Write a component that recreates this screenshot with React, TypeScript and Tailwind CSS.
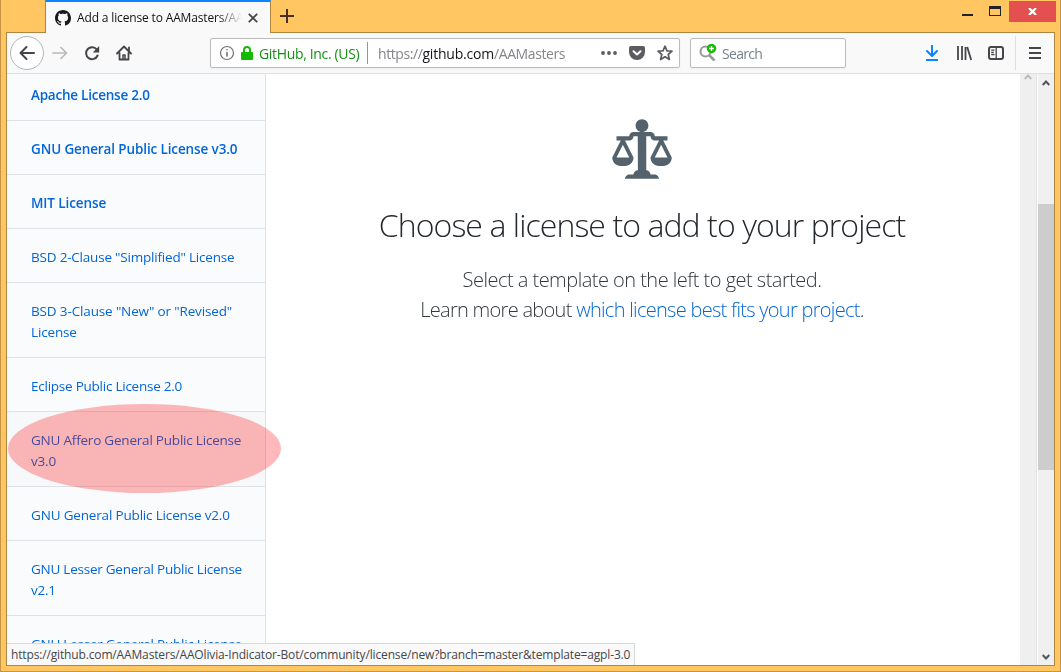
import type { ReactNode } from "react";

type License = { lines: string[]; bold?: boolean; hover?: boolean; spacing: string };

const licenses: License[] = [
  { lines: ["Apache License 2.0"], bold: true, spacing: "tracking-[-0.23px]" },
  { lines: ["GNU General Public License v3.0"], bold: true, spacing: "tracking-[-0.12px]" },
  { lines: ["MIT License"], bold: true, spacing: "tracking-[-0.1px]" },
  { lines: ['BSD 2-Clause "Simplified" License'], spacing: "tracking-[-0.2px]" },
  { lines: ['BSD 3-Clause "New" or "Revised"', "License"], spacing: "tracking-[-0.14px]" },
  { lines: ["Eclipse Public License 2.0"], spacing: "tracking-[-0.24px]" },
  { lines: ["GNU Affero General Public License", "v3.0"], hover: true, spacing: "tracking-[-0.21px]" },
  { lines: ["GNU General Public License v2.0"], spacing: "tracking-[-0.17px]" },
  { lines: ["GNU Lesser General Public License", "v2.1"], spacing: "tracking-[-0.24px]" },
  { lines: ["GNU Lesser General Public License", "v3.0"], spacing: "tracking-[-0.24px]" },
];

function Icon({ children, className = "" }: { children: ReactNode; className?: string }) {
  return (
    <svg
      viewBox="0 0 16 16"
      className={`h-4 w-4 shrink-0 ${className}`}
      fill="none"
      stroke="currentColor"
      strokeWidth="2"
      strokeLinecap="round"
      strokeLinejoin="round"
    >
      {children}
    </svg>
  );
}

function TitleBar() {
  return (
    <div className="flex h-[33px] shrink-0 items-start">
      <div className="flex h-[33px] w-[44px] shrink-0">
        <div className="ml-[5px] grow border-b border-[#ae8642]" />
      </div>
      <div className="flex h-[33px] w-[226px] shrink-0 items-center border-x border-t-2 border-x-[#ae8642] border-t-[#0a84ff] bg-[#f9f9fa] pl-[9px]">
        <svg viewBox="0 0 16 16" className="h-4 w-4 shrink-0" fill="#1b1817">
          <path d="M8 0C3.58 0 0 3.58 0 8c0 3.54 2.29 6.53 5.47 7.59.4.07.55-.17.55-.38 0-.19-.01-.82-.01-1.49-2.01.37-2.53-.49-2.69-.94-.09-.23-.48-.94-.82-1.13-.28-.15-.68-.52-.01-.53.63-.01 1.08.58 1.23.82.72 1.21 1.87.87 2.33.66.07-.52.28-.87.51-1.07-1.78-.2-3.64-.89-3.64-3.95 0-.87.31-1.59.82-2.15-.08-.2-.36-1.02.08-2.12 0 0 .67-.21 2.2.82.64-.18 1.32-.27 2-.27s1.36.09 2 .27c1.53-1.04 2.2-.82 2.2-.82.44 1.1.16 1.92.08 2.12.51.56.82 1.27.82 2.15 0 3.07-1.87 3.75-3.65 3.95.29.25.54.73.54 1.48 0 1.07-.01 1.93-.01 2.2 0 .21.15.46.55.38A8.01 8.01 0 0 0 16 8c0-4.42-3.58-8-8-8z" />
        </svg>
        <span className="ml-[6px] w-[165px] overflow-hidden bg-linear-to-r from-[#111] from-85% to-transparent bg-clip-text text-[12px] tracking-[-0.15px] whitespace-nowrap text-transparent">
          Add a license to AAMasters/AA
        </span>
        <svg viewBox="0 0 10 10" className="ml-[6px] h-[10px] w-[10px]" fill="none" stroke="#454545" strokeWidth="1.8">
          <path d="M.8.8 9.2 9.2M9.2.8.8 9.2" />
        </svg>
      </div>
      <div className="mr-[5px] flex h-[33px] grow items-start border-b border-[#ae8642]">
        <svg viewBox="0 0 14 14" className="mt-[9px] ml-[9px] h-[14px] w-[14px]" fill="none" stroke="#4b2d22" strokeWidth="2">
          <path d="M7 0v14M0 7h14" />
        </svg>
        <div className="-mr-px ml-auto flex">
          <div className="mt-[14px] h-[2px] w-[11px] bg-[#20242a]" />
          <div className="mt-[6px] ml-4 h-[10px] w-3 border border-t-[3px] border-[#20242a]" />
          <div className="mt-px ml-2 flex h-[21px] w-[47px] items-center justify-center bg-[#e45050]">
            <svg viewBox="0 0 9 7" className="h-[7px] w-[9px]" fill="none" stroke="#fff" strokeWidth="2.2">
              <path d="M1 0 8 7M8 0 1 7" />
            </svg>
          </div>
        </div>
      </div>
    </div>
  );
}

function Toolbar() {
  return (
    <div className="flex h-[41px] shrink-0 items-center border-b border-[#dfdfe1] bg-[#f9f9fa] pl-[3px] text-[#45454a]">
      <div className="flex h-[34px] w-[34px] items-center justify-center rounded-full border border-[#b5b5b6] bg-white">
        <Icon>
          <path d="M15 8H1.5M7.5 2 1.5 8l6 6" />
        </Icon>
      </div>
      <Icon className="ml-2 text-[#b9b9ba]">
        <path strokeWidth="1.7" d="M1 8h13.5M9 2.5 14.5 8 9 13.500" />
      </Icon>
      <Icon className="ml-4">
        <path d="M13 4.700A6 6 0 1 0 13.600 10.500" />
        <path d="M15.200 1V7.500H8.700z" fill="currentColor" stroke="none" />
      </Icon>
      <Icon className="ml-4">
        <path strokeWidth="1.8" d="M1 8.500 8 1.500l7 7M3.500 8v6.500h9V8M13 2.500v3" />
        <path strokeWidth="1.500" d="M7 14v-4h2v4" />
      </Icon>

      <div className="ml-[78px] flex h-[30px] w-[470px] shrink-0 items-center rounded-[2px] border border-[#bcbcbd] bg-white pl-2 shadow-xs">
        <Icon className="text-[#737373]">
          <circle cx="8" cy="8" r="6.500" strokeWidth="1.200" />
          <path strokeWidth="1.600" d="M8 7.500v3.500M8 4.700v.1" />
        </Icon>
        <svg viewBox="0 0 12 14" className="ml-[6px] h-[14px] w-3 shrink-0" fill="#12bc00">
          <path d="M2 6V4a4 4 0 0 1 8 0v2h1a1 1 0 0 1 1 1v6a1 1 0 0 1-1 1H1a1 1 0 0 1-1-1V7a1 1 0 0 1 1-1zm2 0h4V4a2 2 0 0 0-4 0z" />
        </svg>
        <span className="ml-[6px] w-[103px] shrink-0 text-[14px] tracking-[-0.34px] whitespace-nowrap text-[#159015]">GitHub, Inc. (US)</span>
        <span className="ml-[5px] h-[22px] w-px shrink-0 bg-[#43c96c]" />
        <span className="ml-[10px] w-[188px] shrink-0 overflow-hidden text-[14px] tracking-[-0.42px] whitespace-nowrap text-[#85858a]">
          https://<span className="tracking-[-0.2px] text-[#16161a]">github.com</span>/AAMasters,
        </span>
        <svg viewBox="0 0 16 4" className="ml-[35px] h-1 w-4 shrink-0" fill="#5c5c60">
          <circle cx="2" cy="2" r="1.900" />
          <circle cx="8" cy="2" r="1.900" />
          <circle cx="14" cy="2" r="1.900" />
        </svg>
        <svg viewBox="0 0 16 14" className="ml-3 h-[14px] w-4 shrink-0">
          <path fill="#5c5c60" d="M2 0h12a2 2 0 0 1 2 2v4a8 8 0 0 1-16 0V2a2 2 0 0 1 2-2z" />
          <path fill="none" stroke="#fff" strokeWidth="2" strokeLinecap="round" strokeLinejoin="round" d="m4.500 5.200 3.500 3.300 3.500-3.300" />
        </svg>
        <Icon className="ml-3 text-[#5c5c60]">
          <path strokeWidth="1.700" d="m8 1.200 2 4.600 5 .4-3.800 3.300 1.200 5L8 11.800l-4.400 2.700 1.200-5L1 6.200l5-.4z" />
        </Icon>
      </div>

      <div className="ml-[10px] flex h-[30px] w-[156px] shrink-0 items-center rounded-[2px] border border-[#bcbcbd] bg-white pl-2 shadow-xs">
        <svg viewBox="0 0 18 18" className="h-[18px] w-[18px] shrink-0" fill="none">
          <circle cx="6.500" cy="7.500" r="5" stroke="#98989a" strokeWidth="2" />
          <path d="m10.500 11.500 5 5" stroke="#98989a" strokeWidth="2.500" />
          <circle cx="12.500" cy="4.500" r="4.700" fill="#12bc00" />
          <path d="M12.500 2v5M10 4.500h5" stroke="#fff" strokeWidth="1.400" />
        </svg>
        <span className="ml-[5px] text-[14px] tracking-[-0.700px] text-[#75828c]">Search</span>
      </div>

      <div className="ml-auto flex items-center pr-[11px]">
        <Icon className="text-[#0a84ff]">
          <path strokeLinecap="butt" d="M8 0v10M2 15h12" />
          <path d="m3 6 5 5 5-5" />
        </Icon>
        <Icon className="ml-4">
          <path strokeLinecap="butt" d="M2 1v14M6 1v14M9.500 2v13M11.200 2l4 13" strokeWidth="1.800" />
        </Icon>
        <Icon className="ml-4">
          <rect x="1" y="2" width="14" height="12" rx="2" />
          <path strokeLinecap="butt" strokeWidth="1.300" d="M8.200 2v12M3.200 5.200h3.300M3.200 7.500h2.500M3.200 9.700h3.300" />
        </Icon>
        <div className="mr-[11px] ml-[11px] h-[34px] w-px bg-[#dedee0]" />
        <Icon>
          <path strokeLinecap="butt" d="M2 3h12M2 8h12M2 13h12" />
        </Icon>
      </div>
    </div>
  );
}

function Sidebar() {
  return (
    <nav className="h-full w-[259px] shrink-0 overflow-hidden border-r border-[#dfe2e5] bg-[#fafbfc]">
      <ul className="-mt-[7px]">
        {licenses.map((item, i) => (
          <li
            key={i}
            className={`border-b border-[#dfe2e5] pt-[18px] pb-[14px] pl-6 text-[13.5px] leading-[21px] whitespace-nowrap text-[#0366d6] ${item.spacing} ${item.bold ? "font-semibold" : ""} ${item.hover ? "bg-[#f6f8fa]" : ""}`}
          >
            {item.lines.map((line) => (
              <div key={line}><span>{line}</span></div>
            ))}
          </li>
        ))}
      </ul>
    </nav>
  );
}

function Chevron({ className, down = false }: { className: string; down?: boolean }) {
  return (
    <svg viewBox="0 0 8 6" className={`h-[6px] w-2 shrink-0 ${className}`} fill="none" stroke="currentColor" strokeWidth="2">
      <path d={down ? "m.7 1 3.300 3.500L7.300 1" : "M.7 5 4 1.500 7.300 5"} />
    </svg>
  );
}

export default function App() {
  return (
    <div className="relative h-[672px] w-[1061px] overflow-hidden bg-[#ffc661] font-['Open_Sans','Noto_Sans',sans-serif]">
      <div className="flex h-full flex-col border border-t-0 border-[#c49643]">
        <TitleBar />
        <div className="mx-[5px] mb-[5px] flex min-h-0 grow flex-col border border-t-0 border-[#ae8642]">
          <Toolbar />
          <div className="flex min-h-0 grow bg-white">
            <Sidebar />
            <main className="flex min-w-0 grow flex-col items-center pt-[41px] pr-[2px] text-center font-light">
              <svg viewBox="0 0 14 16" className="h-[68px] w-[60px] shrink-0" fill="#53626c">
                <path
                  fillRule="evenodd"
                  d="M7 4c-.83 0-1.500-.67-1.500-1.500S6.170 1 7 1s1.500.67 1.500 1.500S7.830 4 7 4zm7 6c0 1.110-.89 2-2 2h-1c-1.110 0-2-.89-2-2l2-4h-1c-.55 0-1-.45-1-1H8v8c.42 0 1 .45 1 1h1c.42 0 1 .45 1 1H3c0-.55.58-1 1-1h1c0-.55.58-1 1-1h.030L6 5H5c0 .55-.45 1-1 1H3l2 4c0 1.110-.89 2-2 2H2c-1.110 0-2-.89-2-2l2-4H1V5h3c0-.55.45-1 1-1h4c.55 0 1 .45 1 1h3v1h-1l2 4zM2.500 7L1 10h3L2.500 7zM13 10l-1.500-3-1.500 3h3z"
                />
              </svg>
              <h1 className="mt-[18px] text-[32px] leading-[48px] tracking-[-0.92px] whitespace-nowrap text-[#24292e]">
                <span>Choose a license to add to your project</span>
              </h1>
              <p className="mt-[16px] text-[20px] leading-[30px] tracking-[-0.52px] whitespace-nowrap text-[#34393e]">
                <span>Select a template on the left to get started.</span>
                <br />
                <span className="tracking-[-0.7px]">Learn more about <a className="text-[#0366d6]">which license best fits your project</a>.</span>
              </p>
            </main>
            <div className="flex w-4 shrink-0 justify-center bg-[#efefef]">
              <Chevron className="text-[#bcbcbc]" />
            </div>
            <div className="w-[2px] shrink-0 border-l border-[#dfe2e5] bg-white" />
            <div className="flex w-4 shrink-0 flex-col items-center bg-[#f0f0f0] pt-[6px] pb-[5px]">
              <Chevron className="text-[#505660]" />
              <div className="mt-[118px] h-[266px] w-full shrink-0 bg-[#cdcdcd]" />
              <Chevron className="mt-auto text-[#505660]" down />
            </div>
          </div>
        </div>
      </div>
      <div className="absolute top-[404px] left-[8px] h-[89px] w-[273px] rounded-[50%] bg-[#ffb9ba] mix-blend-multiply" />
      <div className="absolute top-[404px] left-[8px] h-[89px] w-[273px] rounded-[50%] bg-[#480000] mix-blend-screen" />
      <div className="absolute top-[643px] left-[7px] flex h-[22px] w-[628px] items-center border-t border-r border-[#d8d8da] bg-[#f9f9fa] pt-px pl-1 text-[12px] tracking-[-0.15px] whitespace-nowrap text-[#45454a]">
        <span>https://github.com/AAMasters/AAOlivia-Indicator-Bot/community/license/new?branch=master&amp;template=agpl-3.0</span>
      </div>
    </div>
  );
}
